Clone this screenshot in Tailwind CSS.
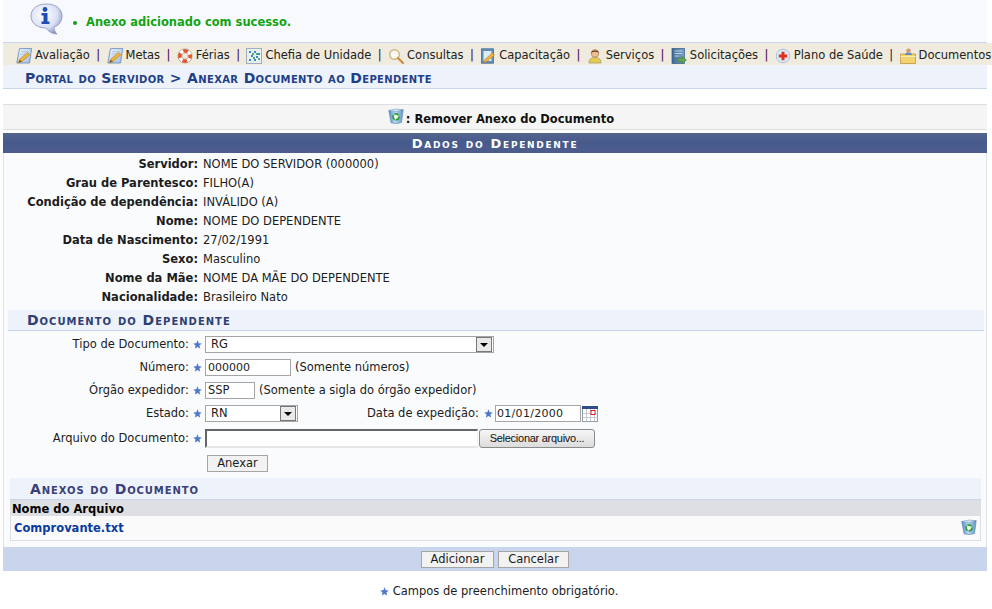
<!DOCTYPE html>
<html lang="pt-BR">
<head>
<meta charset="UTF-8">
<title>Anexar Documento ao Dependente</title>
<script src="https://cdn.jsdelivr.net/npm/@tailwindcss/browser@4"></script>
</head>
<body class="bg-white font-['DejaVu_Sans','Liberation_Sans',sans-serif] text-[11.5px] leading-[13px] text-[#1c1c1c]">
<svg width="0" height="0" class="absolute">
  <defs>
    <linearGradient id="binG" x1="0" y1="0" x2="1" y2="0"><stop offset="0" stop-color="#4f88c4"/><stop offset=".45" stop-color="#bcd9f2"/><stop offset="1" stop-color="#5f94c8"/></linearGradient>
    <linearGradient id="bookG" x1="0" y1="0" x2="1" y2="0"><stop offset="0" stop-color="#3d6a96"/><stop offset="1" stop-color="#7fa3c6"/></linearGradient>
    <linearGradient id="noteG" x1="0" y1="0" x2="1" y2="1"><stop offset="0" stop-color="#f2f7fd"/><stop offset="1" stop-color="#9fbfe3"/></linearGradient>
    <symbol id="bin" viewBox="0 0 16 16">
      <path d="M.8 2.5 L15.200 1.800 L13.500 14.500 Q8 16.500 3 14.800Z" fill="url(#binG)" stroke="#5c87b3" stroke-width=".6"/>
      <path d="M.8 2.500 Q8 0 15.200 1.800 Q8 4.500 .8 2.500Z" fill="#e6f2fb" stroke="#5c87b3" stroke-width=".5"/>
      <circle cx="8" cy="8.800" r="3" fill="#e4f3e4" stroke="#2f9e3a" stroke-width="1.700" stroke-dasharray="5 1"/>
      <circle cx="8" cy="8.800" r=".9" fill="#fff"/>
    </symbol>
    <symbol id="star" viewBox="0 0 9 9">
      <path d="M4.5 .3 L5.7 3.2 L8.8 3.4 L6.4 5.4 L7.2 8.6 L4.5 6.9 L1.8 8.6 L2.6 5.4 L.2 3.4 L3.3 3.2Z" fill="#4f78c8"/>
    </symbol>
    <symbol id="note" viewBox="0 0 16 16">
      <path d="M3.5 .6 H15.600 L13.500 15 H.8Z" fill="url(#noteG)" stroke="#5f86b8" stroke-width=".8"/>
      <path d="M5 3.500 H13 M4.500 6 H10" stroke="#a9c2e0" stroke-width=".8"/>
      <path d="M2.500 14.500 L3.500 11.500 L11.500 4.500 L13.800 6.800 L6 13.500Z" fill="#f0b63c" stroke="#b97a1e" stroke-width=".6"/>
      <path d="M2.500 15 L3.500 11.800 L6 13.500Z" fill="#8a5a20"/>
    </symbol>
  </defs>
</svg>

<div class="ml-[3px] w-[984px]">
  <!-- mensagem -->
  <div class="h-[43px] bg-[#f8f9fd] border-b border-[#c8d5ec] flex">
    <svg class="ml-[27px] mt-[3px] w-[36px] h-[33px]" viewBox="0 0 36 33">
      <defs><radialGradient id="bub" cx=".4" cy=".35" r=".7"><stop offset="0" stop-color="#fff"/><stop offset=".65" stop-color="#d9dff5"/><stop offset="1" stop-color="#8d97c4"/></radialGradient></defs>
      <path d="M16 1 C26 1 32 6 32 13 C32 19 28 23 24 24 C24 27 25 29 27 31 C22 31 18 28 16 25 C7 25 1 20 1 13 C1 6 7 1 16 1Z" fill="url(#bub)" stroke="#8790b8" stroke-width=".8"/>
      <circle cx="15" cy="6.5" r="2.4" fill="#1f4fb4"/>
      <path d="M11.5 10 H17.5 V18.5 H19.5 V21 H11.5 V18.5 H13.5 V12.5 H11.5Z" fill="#1f4fb4"/>
    </svg>
    <div class="ml-[7px] mt-[16px] flex items-center h-[13px] font-bold text-[#12a312]">
      <span class="w-[4px] h-[4px] rounded-full bg-[#1c9a1c]"></span>
      <span class="ml-[9px]">Anexo adicionado com sucesso.</span>
    </div>
  </div>

  <!-- menu -->
  <div class="w-[989px] h-[22px] bg-[#efebde] flex items-center pl-[13px] pt-[3px] whitespace-nowrap text-[#222]">
    <svg class="w-[16px] h-[16px]"><use href="#note"/></svg><span class="ml-[3px]">Avaliação</span>
    <span class="mx-[6.4px] text-[#404]">|</span>
    <svg class="w-[16px] h-[16px]"><use href="#note"/></svg><span class="ml-[3px]">Metas</span>
    <span class="mx-[6.4px] text-[#404]">|</span>
    <svg class="w-[16px] h-[16px]" viewBox="0 0 16 16"><circle cx="8" cy="8" r="5.200" fill="none" stroke="#e2552f" stroke-width="3.800"/><circle cx="8" cy="8" r="5.200" fill="none" stroke="#fff" stroke-width="3.800" stroke-dasharray="3.400 4.770" stroke-dashoffset="-2.380"/><circle cx="8" cy="8" r="7.200" fill="none" stroke="#a89684" stroke-width=".5"/><circle cx="8" cy="8" r="3.200" fill="none" stroke="#a89684" stroke-width=".5"/></svg><span class="ml-[3px]">Férias</span>
    <span class="mx-[6.4px] text-[#404]">|</span>
    <svg class="w-[16px] h-[16px]" viewBox="0 0 16 16"><rect x=".5" y=".5" width="15" height="15" fill="#e8eef2" stroke="#9fb0bc"/><path d="M3 3h2v2H3zM8 3h2v2H8zM12 5h2v2h-2zM5 7h2v2H5zM10 8h2v2h-2zM3 11h2v2H3zM8 11h2v2H8z" fill="#3f86c6"/><path d="M6 5h2v2H6zM10 5h2v2h-2zM7 9h2v2H7zM12 10h2v2h-2z" fill="#4fb06a"/></svg><span class="ml-[3px]">Chefia de Unidade</span>
    <span class="mx-[6.4px] text-[#404]">|</span>
    <svg class="w-[16px] h-[16px]" viewBox="0 0 16 16"><circle cx="6.5" cy="6.5" r="4.8" fill="#fbfbf4" stroke="#d4b483" stroke-width="1.4"/><path d="M10 10 L15 15" stroke="#c98f4a" stroke-width="2.2" stroke-linecap="round"/></svg><span class="ml-[3px]">Consultas</span>
    <span class="mx-[6.4px] text-[#404]">|</span>
    <svg class="w-[16px] h-[16px]" viewBox="0 0 16 16"><rect x="1.5" y=".8" width="12" height="14.4" fill="#5f8fb8" stroke="#3c6488" stroke-width=".7"/><rect x="3.5" y="3" width="8" height="10" fill="#dfeaf5"/><path d="M4 14.5 L5 11.5 L12.5 5 L14.5 7 L7 13.5Z" fill="#f0b63c" stroke="#b97a1e" stroke-width=".6"/></svg><span class="ml-[3px]">Capacitação</span>
    <span class="mx-[6.4px] text-[#404]">|</span>
    <svg class="w-[16px] h-[16px]" viewBox="0 0 16 16"><path d="M2 15 C2 10.5 5 9.5 8 9.5 C11 9.5 14 10.5 14 15Z" fill="#e6cc52" stroke="#8f8a55" stroke-width=".6"/><circle cx="8" cy="5.4" r="3.8" fill="#efbd92" stroke="#8a5f40" stroke-width=".5"/><path d="M4.2 5 C4 1.5 12 1.5 11.8 5 C10 3.4 6 3.4 4.2 5Z" fill="#5a2c18"/></svg><span class="ml-[3px]">Serviços</span>
    <span class="mx-[6.4px] text-[#404]">|</span>
    <svg class="w-[16px] h-[16px]" viewBox="0 0 16 16"><rect x="1" y=".5" width="12.5" height="15" fill="url(#bookG)" stroke="#315a80" stroke-width=".7"/><path d="M3.5 3H11M3.5 5.5H11M3.5 8H8" stroke="#c7dbea" stroke-width=".9"/><path d="M7 10.5H11V8.5L15.5 12L11 15.5V13.5H7Z" fill="#62a850" stroke="#3e7a33" stroke-width=".5"/></svg><span class="ml-[3px]">Solicitações</span>
    <span class="mx-[6.4px] text-[#404]">|</span>
    <svg class="w-[16px] h-[16px]" viewBox="0 0 16 16"><circle cx="8" cy="8" r="6.8" fill="#dce9f6" stroke="#9db8d6" stroke-width=".8"/><path d="M6.5 3.8h3v2.7h2.7v3H9.500v2.700h-3V9.500H3.800v-3h2.700z" fill="#e03020"/></svg><span class="ml-[3px]">Plano de Saúde</span>
    <span class="mx-[6.4px] text-[#404]">|</span>
    <svg class="w-[16px] h-[16px]" viewBox="0 0 16 16"><path d="M.5 6H15.500V15.500H.5Z" fill="#f3d36f" stroke="#b58f35" stroke-width=".7"/><path d="M.5 8.500H15.500" stroke="#fbeeb4"/><path d="M5 7 C5 5 6.500 4.500 8.500 4.500 C10.500 4.500 12 5 12 7Z" fill="#5a8fc4"/><circle cx="8.500" cy="2.800" r="2.300" fill="#d99a72"/></svg><span class="ml-[3px]">Documentos</span>
  </div>

  <!-- titulo -->
  <div class="h-[24px] bg-[#eef3fb] border-b border-[#c8d5ec] pl-[22px] pt-[6px] text-[14px] leading-[15px] tracking-[.35px] font-bold [font-variant:small-caps] text-[#1f3f86]">Portal do Servidor &gt; Anexar Documento ao Dependente</div>

  <!-- acao remover -->
  <div class="mt-[15px] h-[26px] bg-[#f5f5f5] border-y border-[#dedede] flex items-center justify-center pl-[12px] font-bold text-[#111]">
    <svg class="w-[16px] h-[16px] mb-[2px]"><use href="#bin"/></svg><span class="ml-[2px] mt-[4px]">: Remover Anexo do Documento</span>
  </div>

  <!-- form -->
  <div class="mt-[3px] bg-[#f9fbfd] border-x border-[#dfe3ea]">
    <div class="-mx-px h-[20px] bg-[linear-gradient(#55658f,#465a8c_45%,#4d5d8d)] text-center text-white font-bold text-[13px] leading-[22px] tracking-[1.7px] [font-variant:small-caps]">Dados do Dependente</div>

    <dl class="pt-[2px] grid grid-cols-[194px_1fr] gap-x-[5px] auto-rows-[19px] items-center">
      <dt class="text-right font-bold">Servidor:</dt><dd>NOME DO SERVIDOR (000000)</dd>
      <dt class="text-right font-bold">Grau de Parentesco:</dt><dd>FILHO(A)</dd>
      <dt class="text-right font-bold">Condição de dependência:</dt><dd>INVÁLIDO (A)</dd>
      <dt class="text-right font-bold">Nome:</dt><dd>NOME DO DEPENDENTE</dd>
      <dt class="text-right font-bold">Data de Nascimento:</dt><dd>27/02/1991</dd>
      <dt class="text-right font-bold">Sexo:</dt><dd>Masculino</dd>
      <dt class="text-right font-bold">Nome da Mãe:</dt><dd>NOME DA MÃE DO DEPENDENTE</dd>
      <dt class="text-right font-bold">Nacionalidade:</dt><dd>Brasileiro Nato</dd>
    </dl>

    <div class="mt-[3px] ml-[4px] mr-[2px] h-[21px] bg-[#eef3fb] border-b border-[#c8d5ec] pl-[19px] pt-[2px] font-bold text-[14px] leading-[16px] tracking-[1px] [font-variant:small-caps] text-[#2f3f74]">Documento do Dependente</div>

    <div class="mt-[2px] flex flex-col">
      <div class="h-[23px] flex items-center">
        <span class="w-[185px] text-right">Tipo de Documento:</span>
        <svg class="ml-[4px] w-[9px] h-[9px]"><use href="#star"/></svg>
        <div class="ml-[3px] w-[289px] h-[17px] bg-white border border-[#a5a5a5] flex items-center justify-between pl-[5px] pr-px"><span>RG</span>
          <span class="w-[16px] h-[15px] bg-[#e9e9e9] border border-[#777] flex items-center justify-center"><span class="border-x-[4px] border-t-[4px] border-x-transparent border-t-black"></span></span></div>
      </div>
      <div class="h-[23px] flex items-center">
        <span class="w-[185px] text-right">Número:</span>
        <svg class="ml-[4px] w-[9px] h-[9px]"><use href="#star"/></svg>
        <div class="ml-[3px] w-[86px] h-[17px] bg-white border border-[#a5a5a5] pl-[2px] text-[11px] leading-[15px]">000000</div>
        <span class="ml-[4px]">(Somente números)</span>
      </div>
      <div class="h-[23px] flex items-center">
        <span class="w-[185px] text-right">Órgão expedidor:</span>
        <svg class="ml-[4px] w-[9px] h-[9px]"><use href="#star"/></svg>
        <div class="ml-[3px] w-[50px] h-[17px] bg-white border border-[#a5a5a5] pl-[2px] leading-[15px]">SSP</div>
        <span class="ml-[4px]">(Somente a sigla do órgão expedidor)</span>
      </div>
      <div class="h-[23px] flex items-center">
        <span class="w-[185px] text-right">Estado:</span>
        <svg class="ml-[4px] w-[9px] h-[9px]"><use href="#star"/></svg>
        <div class="ml-[3px] w-[93px] h-[17px] bg-white border border-[#a5a5a5] flex items-center justify-between pl-[5px] pr-px"><span>RN</span>
          <span class="w-[16px] h-[15px] bg-[#e9e9e9] border border-[#777] flex items-center justify-center"><span class="border-x-[4px] border-t-[4px] border-x-transparent border-t-black"></span></span></div>
        <span class="ml-[69px]">Data de expedição:</span>
        <svg class="ml-[5px] w-[9px] h-[9px]"><use href="#star"/></svg>
        <div class="ml-[2px] w-[86px] h-[17px] bg-white border border-[#a5a5a5] pl-[1px] text-[11px] tracking-[.3px] leading-[15px]">01/01/2000</div>
        <svg class="ml-[1px] w-[16px] h-[16px]" viewBox="0 0 16 16"><rect x=".5" y=".5" width="15" height="15" fill="#fff" stroke="#8f9aa8"/><rect x="0" y="0" width="16" height="3" fill="#2f4d8c"/><path d="M.5 7.500H15.500M.5 11.500H15.500M4.500 3V15.500M8.500 3V15.500M12.500 3V15.500" stroke="#c5c9d2"/><rect x="9" y="4.500" width="4" height="4" fill="#fff" stroke="#e02020"/></svg>
      </div>
      <div class="h-[27px] flex items-center">
        <span class="w-[185px] text-right">Arquivo do Documento:</span>
        <svg class="ml-[4px] w-[9px] h-[9px]"><use href="#star"/></svg>
        <div class="ml-[3px] w-[273px] h-[19px] bg-white border-t-2 border-l-2 border-r border-b-2 border-t-[#666] border-l-[#666] border-r-[#eee] border-b-[#e6e6e6]"></div>
        <div class="ml-[1px] w-[116px] h-[19px] rounded-[3px] border border-[#8a8a8a] bg-[linear-gradient(#f6f6f6,#dcdcdc)] text-center text-[11px] tracking-[-.27px] leading-[17px] font-['Liberation_Sans',sans-serif] text-[#111]">Selecionar arquivo...</div>
      </div>
      <div class="h-[23px] flex items-center pl-[203px]">
        <button class="w-[61px] h-[17px] bg-[#f2f2f2] border border-[#a5a5a5] leading-[15px]">Anexar</button>
      </div>
    </div>

    <div class="mt-[3px] ml-[6px] mr-[5px] h-[22px] bg-[#eef3fb] border-b border-[#c8d5ec] pl-[20px] pt-[3px] font-bold text-[14px] leading-[16px] tracking-[.9px] [font-variant:small-caps] text-[#3a3f78]">Anexos do Documento</div>
    <div class="ml-[6px] mr-[5px] border-x border-b border-[#dedfe3] bg-[#fafafa]">
      <div class="h-[16px] bg-[#dedfe3] pl-[1px] font-bold text-[#000] leading-[18px]">Nome do Arquivo</div>
      <div class="h-[24px] flex items-center justify-between pl-[3px] pr-[3px]">
        <a class="font-bold text-[#0b3aa0]">Comprovante.txt</a>
        <svg class="w-[16px] h-[16px] mb-[2px]"><use href="#bin"/></svg>
      </div>
    </div>
    <div class="h-[6px]"></div>
  </div>

  <!-- botoes -->
  <div class="h-[24px] bg-[#c8d5ec] flex items-center justify-center gap-[4px]">
    <button class="w-[73px] h-[17px] bg-[#f2f2f2] border border-[#a5a5a5] leading-[15px]">Adicionar</button>
    <button class="w-[71px] h-[17px] bg-[#f2f2f2] border border-[#a5a5a5] leading-[15px]">Cancelar</button>
  </div>

  <div class="mt-[14px] flex items-center justify-center pl-[8px]">
    <svg class="w-[9px] h-[9px] mr-[4px]"><use href="#star"/></svg><span>Campos de preenchimento obrigatório.</span>
  </div>
</div>
</body>
</html>
